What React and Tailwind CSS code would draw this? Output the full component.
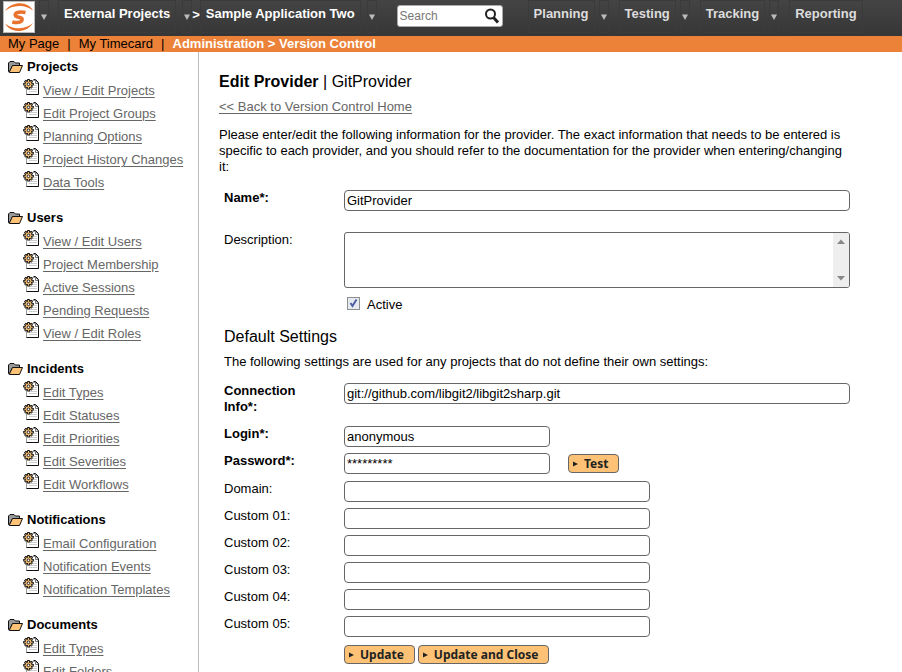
import React from "react";

const sections = [
  { title: "Projects", links: ["View / Edit Projects", "Edit Project Groups", "Planning Options", "Project History Changes", "Data Tools"] },
  { title: "Users", links: ["View / Edit Users", "Project Membership", "Active Sessions", "Pending Requests", "View / Edit Roles"] },
  { title: "Incidents", links: ["Edit Types", "Edit Statuses", "Edit Priorities", "Edit Severities", "Edit Workflows"] },
  { title: "Notifications", links: ["Email Configuration", "Notification Events", "Notification Templates"] },
  { title: "Documents", links: ["Edit Types", "Edit Folders"] },
];

const field = "block h-[21px] rounded-[4px] border border-[#666] bg-white px-[2px] text-[13px] leading-4 text-black outline-none";

function Logo() {
  return (
    <svg width="32" height="32" viewBox="0 0 32 32" className="block">
      <rect x="0.5" y="0.5" width="31" height="31" fill="#fff" stroke="#bbb" />
      <path d="M2 10C6 4 12 2.200 17 2.300C23 2.500 27.500 5 30 9.500C26 6.300 21 4.800 16 5C10.500 5.200 6 6.800 2 10Z" fill="#e8732f" />
      <path d="M30 22C26 28.200 20 30.200 15 30C9 29.700 4.500 27 2 22.500C6 26 11 27.400 16 27.200C21.500 27 26 25.200 30 22Z" fill="#e8732f" />
      <path d="M22.500 11.500C20 11 15.800 10.700 13.600 11.900C11.500 13.200 11.800 15 14 15.700L17.600 16.700C19.900 17.500 19.400 20 17.300 20.900C15 21.800 12 21.500 9.300 20.900" fill="none" stroke="#e8732f" strokeWidth="3.600" />
    </svg>
  );
}

function Folder() {
  return (
    <svg width="15" height="12" viewBox="0 0 15 12" className="block">
      <path d="M0.500 10.500V2L2 0.500H6L7.500 2H11.500V5H4.500L1.500 11Z" fill="#999" stroke="#111" strokeLinejoin="round" />
      <path d="M1.200 11.400L4.500 4.500H14.500L11.500 11.500H1.500Z" fill="#fdc276" stroke="#111" strokeLinejoin="round" />
    </svg>
  );
}

function PageGear() {
  return (
    <svg width="16" height="16" viewBox="0 0 16 16" className="block">
      <path d="M3.500 1.500H12.500L15.500 4.500V15.500H3.500Z" fill="#fff" stroke="#999" />
      <path d="M10.500 0.500H12.500L15.500 3.500V15.500H3.500" fill="none" stroke="#111" />
      <path d="M12.500 1V4.500H15" fill="none" stroke="#777" />
      <path d="M11 6.500H14M10 8.500H14M6 10.500H14M6 12.500H14" stroke="#ccc" />
      <path d="M5.500 0V10.600M0.200 5.300H10.800M1.900 1.700L9.100 8.900M9.100 1.700L1.900 8.900" stroke="#111" strokeWidth="2.600" />
      <circle cx="5.500" cy="5.300" r="4.200" fill="#111" />
      <path d="M5.500 1V9.600M1.200 5.300H9.800M2.500 2.300L8.500 8.300M8.500 2.300L2.500 8.300" stroke="#f2bd75" strokeWidth="1.100" />
      <circle cx="5.500" cy="5.300" r="2.900" fill="#f2bd75" />
      <circle cx="5.500" cy="5.300" r="1.300" fill="#fff" stroke="#111" strokeWidth="0.900" />
    </svg>
  );
}

function Down() {
  return (
    <button type="button" aria-label="Open menu" className="flex h-[33px] w-[10px] items-center justify-center border border-[#3b3b3b]">
      <svg width="6" height="6" viewBox="0 0 6 6"><path d="M0 0.500H6L3 6Z" fill="#bbb" /></svg>
    </button>
  );
}

function NavItem({ children, light }) {
  return (
    <a href="#" className={"flex h-[33px] items-start whitespace-nowrap border border-[#3b3b3b] px-[5px] pt-[5px] text-[13px] font-bold leading-4 " + (light ? "text-white" : "text-[#ddd]")}>
      {children}
    </a>
  );
}

function OrangeButton({ children }) {
  return (
    <button type="button" className="flex h-[19px] items-center gap-[6px] rounded-[4px] border border-[#666] bg-[#fdc276] pl-[4px] pr-[10px] font-['Noto_Sans',sans-serif] text-[12px] font-bold leading-4 text-[#222]">
      <svg width="5" height="6" viewBox="0 0 5 6"><path d="M0 0.500L5 3L0 5.500Z" fill="#222" /></svg>
      {children}
    </button>
  );
}

function Row({ id, label, bold, children, className = "" }) {
  return (
    <div className={"flex items-start " + className}>
      <label htmlFor={id} className={"w-[120px] shrink-0 pr-8 leading-4 " + (bold ? "font-bold" : "")}>{label}</label>
      {children}
    </div>
  );
}

export default function App() {
  return (
    <div className="flex h-screen flex-col overflow-hidden bg-white font-['Liberation_Sans',Arial,sans-serif] text-[13px] leading-4 text-black">
      <header className="flex h-9 shrink-0 items-start bg-linear-to-b from-[#444] to-[#363636] pl-[3px]">
        <a href="#" aria-label="Home" className="mt-px mr-1"><Logo /></a>
        <Down />
        <div className="ml-[9px] flex gap-[6px]">
          <NavItem light>External Projects</NavItem>
          <Down />
        </div>
        <span className="pt-[7px] font-bold text-white">&gt;</span>
        <div className="flex gap-[6px]">
          <NavItem light>Sample Application Two</NavItem>
          <Down />
        </div>
        <div className="mt-[5px] ml-5 flex h-[22px] w-[106px] items-center rounded-[3px] border border-[#aaa] bg-white">
          <input aria-label="Search" placeholder="Search" className="h-5 w-[86px] bg-transparent pl-[2px] text-[12px] outline-none placeholder:text-[#777]" />
          <button type="button" aria-label="Run search">
            <svg width="16" height="16" viewBox="0 0 16 16" className="block">
              <circle cx="6.500" cy="6" r="4.500" fill="#fff" stroke="#222" strokeWidth="2" />
              <path d="M9.500 9.500L14 14.500" stroke="#222" strokeWidth="3" />
            </svg>
          </button>
        </div>
        <nav className="ml-[25px] flex gap-[10px]">
          <div className="flex gap-[4px]"><NavItem>Planning</NavItem><Down /></div>
          <div className="flex gap-[4px]"><NavItem>Testing</NavItem><Down /></div>
          <div className="flex gap-[4px]"><NavItem>Tracking</NavItem><Down /></div>
          <NavItem>Reporting</NavItem>
        </nav>
      </header>

      <div className="flex h-4 shrink-0 items-center gap-2 bg-[#eb8237] pl-2">
        <a href="#">My Page</a>
        <span>|</span>
        <a href="#">My Timecard</a>
        <span>|</span>
        <span className="font-bold text-white">Administration &gt; Version Control</span>
      </div>

      <div className="flex min-h-0 flex-1">
        <aside className="w-[199px] shrink-0 overflow-hidden border-r border-[#bbb] pt-[3px]">
          {sections.map((s) => (
            <section key={s.title} className="mb-3 pl-2">
              <h2 className="flex h-6 items-center gap-1 font-bold"><Folder />{s.title}</h2>
              <ul className="pl-[15px]">
                {s.links.map((l) => (
                  <li key={l} className="flex h-[23px] items-start gap-1">
                    <PageGear />
                    <a href="#" className="whitespace-nowrap pt-1 text-[#666] underline underline-offset-2">{l}</a>
                  </li>
                ))}
              </ul>
            </section>
          ))}
        </aside>

        <main className="min-w-0 flex-1 pt-5 pr-10 pl-5">
          <h1 className="text-[16px] leading-5"><b>Edit Provider</b> | GitProvider</h1>
          <a href="#" className="mt-[7px] block w-fit text-[#666] underline underline-offset-2">&lt;&lt; Back to Version Control Home</a>
          <p className="mt-3 pr-3">
            Please enter/edit the following information for the provider. The exact information that needs to be entered is specific to each provider, and you should refer to the documentation for the provider when entering/changing it:
          </p>

          <form className="mt-[15px] mr-3 pl-[5px]" onSubmit={(e) => e.preventDefault()}>
            <Row id="name" label="Name*:" bold>
              <input id="name" defaultValue="GitProvider" className={field + " flex-1"} />
            </Row>
            <Row id="desc" label="Description:" className="mt-[21px]">
              <div className="flex h-14 flex-1 overflow-hidden rounded-[3px] border border-[#666]">
                <textarea id="desc" className="min-w-0 flex-1 resize-none px-[3px] outline-none" />
                <div className="flex w-4 flex-col items-center justify-between bg-[#eee] py-[6px]">
                  <svg width="8" height="5" viewBox="0 0 8 5"><path d="M0 5L4 0.500L8 5Z" fill="#888" /></svg>
                  <svg width="8" height="5" viewBox="0 0 8 5"><path d="M0 0L4 4.500L8 0Z" fill="#888" /></svg>
                </div>
              </div>
            </Row>
            <div className="mt-[9px] ml-[123px] flex items-start gap-[7px]">
              <span className="grid">
                <input id="active" type="checkbox" defaultChecked className="col-start-1 row-start-1 size-[13px] appearance-none border border-[#8e8f8f] bg-[#e6e9ee]" />
                <svg width="13" height="13" viewBox="0 0 13 13" className="pointer-events-none col-start-1 row-start-1"><path d="M3.500 6L5.500 9L9.500 2.500" fill="none" stroke="#4b5fa5" strokeWidth="2" /></svg>
              </span>
              <label htmlFor="active">Active</label>
            </div>
            <h2 className="mt-[14px] text-[16px] leading-5">Default Settings</h2>
            <p className="mt-[7px]">The following settings are used for any projects that do not define their own settings:</p>

            <Row id="conn" label="Connection Info*:" bold className="mt-[13px]">
              <input id="conn" defaultValue="git://github.com/libgit2/libgit2sharp.git" className={field + " flex-1"} />
            </Row>
            <div className="mt-[11px] flex flex-col gap-[6px]">
              <Row id="login" label="Login*:" bold>
                <input id="login" defaultValue="anonymous" className={field + " w-[206px]"} />
              </Row>
              <Row id="password" label="Password*:" bold>
                <input id="password" defaultValue="*********" className={field + " w-[206px]"} />
                <div className="ml-[18px] pt-px"><OrangeButton>Test</OrangeButton></div>
              </Row>
            </div>
            <div className="mt-[7px] flex flex-col gap-[6px]">
              {["Domain:", "Custom 01:", "Custom 02:", "Custom 03:", "Custom 04:", "Custom 05:"].map((l, i) => (
                <Row key={l} id={"prop" + i} label={l}>
                  <input id={"prop" + i} className={field + " w-[306px]"} />
                </Row>
              ))}
            </div>
            <div className="mt-[8px] ml-[120px] flex gap-[3px]">
              <OrangeButton>Update</OrangeButton>
              <OrangeButton>Update and Close</OrangeButton>
            </div>
          </form>
        </main>
      </div>
    </div>
  );
}
